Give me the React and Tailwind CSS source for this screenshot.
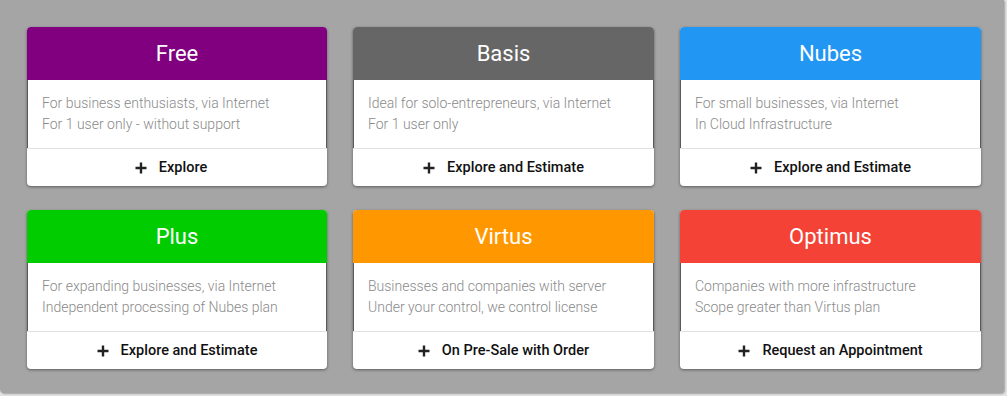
import React from 'react';

const plans = [
  {
    name: 'Free',
    color: 'bg-[#800080]',
    lines: ['For business enthusiasts, via Internet', 'For 1 user only - without support'],
    action: 'Explore',
    extra: 'pr-[12px]',
  },
  {
    name: 'Basis',
    color: 'bg-[#666666]',
    lines: ['Ideal for solo-entrepreneurs, via Internet', 'For 1 user only'],
    action: 'Explore and Estimate',
  },
  {
    name: 'Nubes',
    color: 'bg-[#2196f3]',
    lines: ['For small businesses, via Internet', 'In Cloud Infrastructure'],
    action: 'Explore and Estimate',
  },
  {
    name: 'Plus',
    color: 'bg-[#00cc00]',
    lines: ['For expanding businesses, via Internet', 'Independent processing of Nubes plan'],
    action: 'Explore and Estimate',
  },
  {
    name: 'Virtus',
    color: 'bg-[#ff9800]',
    lines: ['Businesses and companies with server', 'Under your control, we control license'],
    action: 'On Pre-Sale with Order',
  },
  {
    name: 'Optimus',
    color: 'bg-[#f44336]',
    lines: ['Companies with more infrastructure', 'Scope greater than Virtus plan'],
    action: 'Request an Appointment',
  },
];

function PlusIcon() {
  return (
    <svg width="12" height="12" viewBox="0 0 12 12" className="shrink-0">
      <path d="M6 0.5v11M0.5 6h11" stroke="#222" strokeWidth="2.4" />
    </svg>
  );
}

function PlanCard({ plan }) {
  return (
    <div className="flex flex-col h-[159px] rounded-[4px] bg-white shadow-[0_1px_3px_rgba(0,0,0,0.45)] overflow-hidden">
      <div className={`${plan.color} h-[53px] flex items-center justify-center text-white text-[22px]`}>
        {plan.name}
      </div>
      <div className="h-[68px] px-[14px] pt-[13px] text-[14px] leading-[21px] font-light text-[#8a8a8a] border-x border-[#5a5a5a]">
        {plan.lines.map((line) => (
          <div key={line}>{line}</div>
        ))}
      </div>
      <div
        className={`flex-1 border-t border-[#e2e2e2] flex items-center justify-center gap-[12px] text-[14.5px] font-medium text-[#111] ${plan.extra || ''}`}
      >
        <PlusIcon />
        <span>{plan.action}</span>
      </div>
    </div>
  );
}

export default function App() {
  return (
    <div className="w-[1007px] h-[396px] bg-[#e4e4e4] font-['Roboto',sans-serif]">
      <div className="w-[1004px] h-[393px] bg-[#a5a5a5] rounded-b-[4px] shadow-[1px_1px_2px_rgba(0,0,0,0.3)] pt-[27px] pl-[27px]">
        <div className="grid grid-cols-[300px_301px_301px] gap-x-[26px] gap-y-[24px]">
          {plans.map((plan) => (
            <PlanCard key={plan.name} plan={plan} />
          ))}
        </div>
      </div>
    </div>
  );
}
